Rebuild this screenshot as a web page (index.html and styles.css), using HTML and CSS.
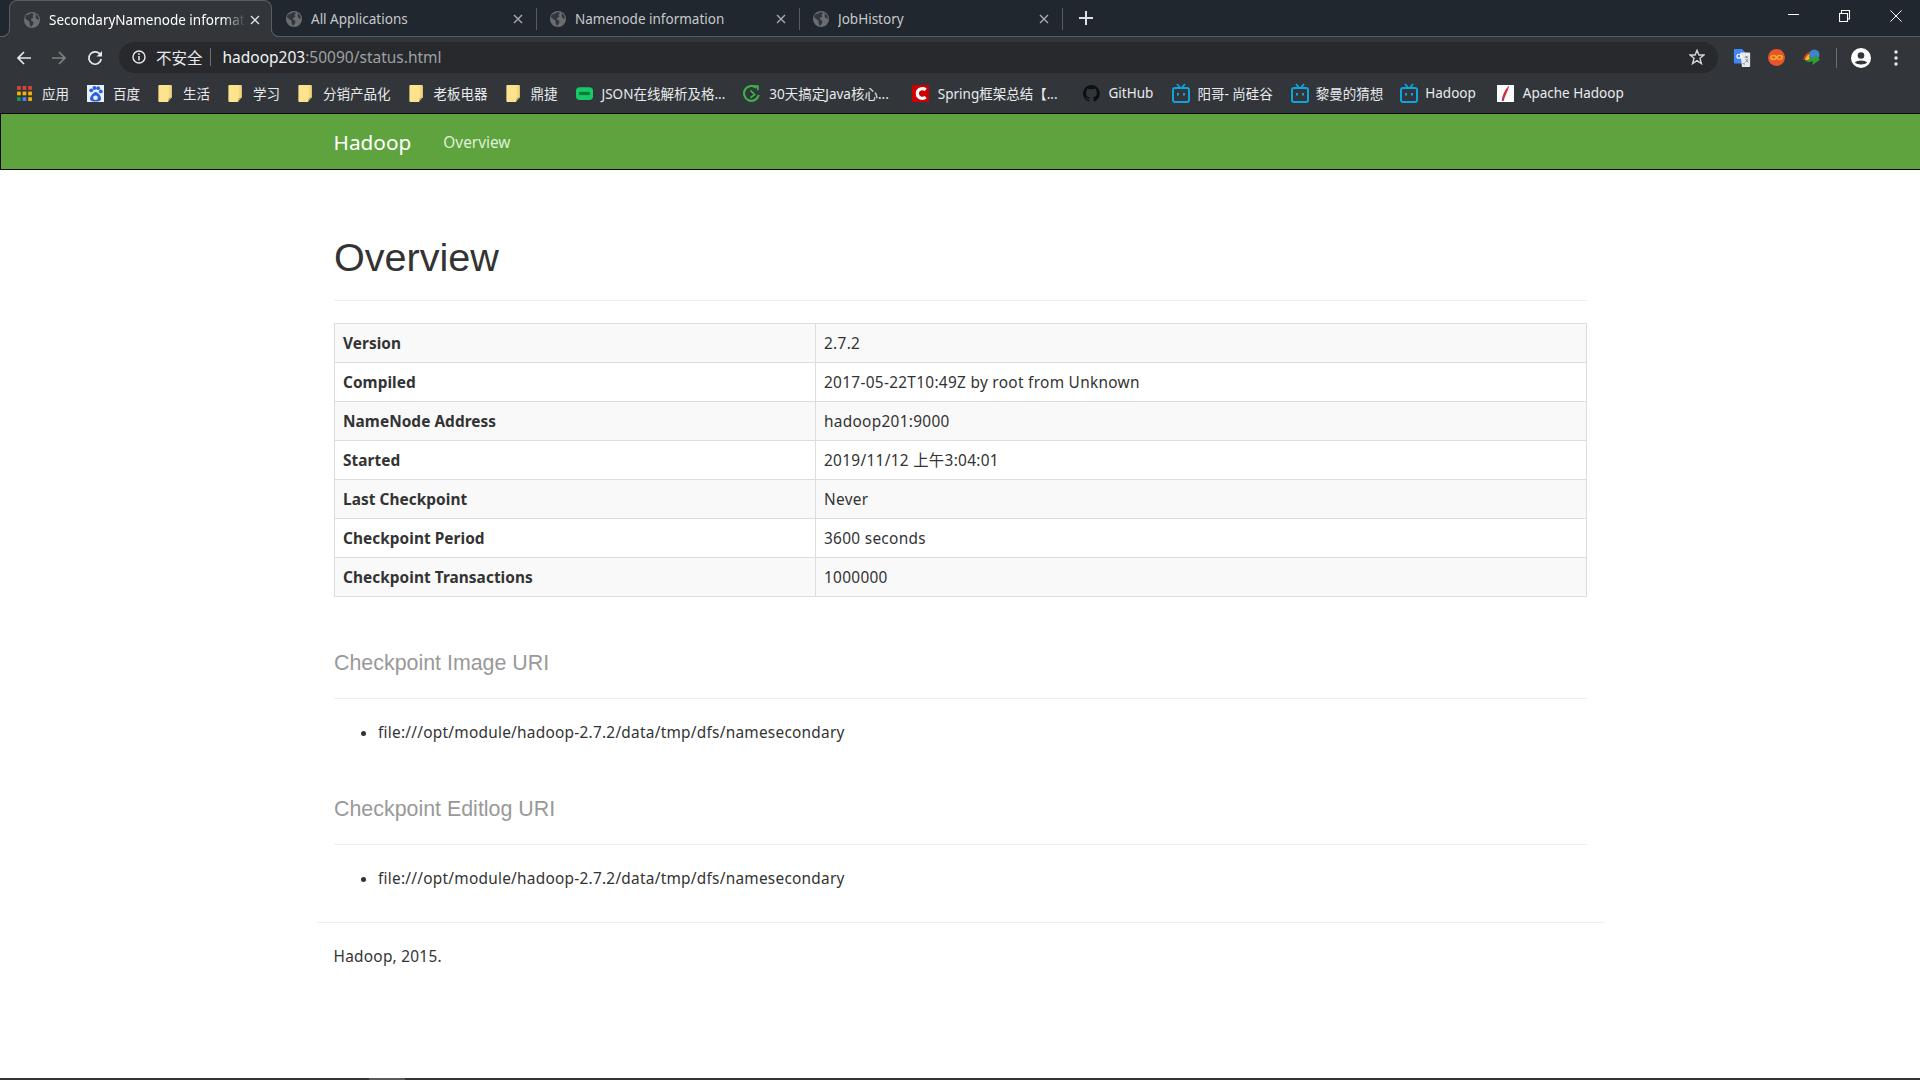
FILE: index.html
```html
<!DOCTYPE html>
<html lang="zh">
<head>
<meta charset="utf-8">
<title>SecondaryNamenode information</title>
<link rel="stylesheet" href="styles.css">
</head>
<body>
<svg class="defs" width="0" height="0" aria-hidden="true">
  <symbol id="globe" viewBox="0 0 16 16">
    <circle cx="8" cy="8" r="8" fill="#6a6e72"/>
    <path d="M2 3.5 5 2.5 7.5 1 10 2 8.5 4 9.5 5.5 7 7 7.5 9 9.5 9.8 9 12.5 7 15 5.5 12 5.5 9.5 3 8 1 6Z" fill="#33373b"/>
    <path d="M11 1.5 14 4 15 8 12.5 7 11.5 5 12 3.5Z" fill="#33373b"/>
  </symbol>
  <symbol id="folder" viewBox="0 0 14 18">
    <path d="M0 1Q0 0 1 0H13Q14 0 14 1V13L10 18H1Q0 18 0 17Z" fill="#fee38f"/>
    <path d="M11 0H13Q14 0 14 1V13L11 16Z" fill="#f4d67e"/>
    <path d="M14 13 10 18 11 14Z" fill="#b39a52"/>
  </symbol>
  <symbol id="bili" viewBox="0 0 18 20">
    <path d="M5 1 8 4.5M13 1 10 4.5" stroke="#10a3dc" stroke-width="1.8" fill="none"/>
    <rect x="1" y="5" width="16" height="14" rx="2" fill="none" stroke="#10a3dc" stroke-width="2"/>
    <rect x="5" y="10" width="2" height="2.5" fill="#10a3dc"/>
    <rect x="11" y="10" width="2" height="2.5" fill="#10a3dc"/>
  </symbol>
  <symbol id="tabx" viewBox="0 0 10 10">
    <path d="M1 1 9 9M9 1 1 9" stroke="currentColor" stroke-width="1.4" fill="none"/>
  </symbol>
</svg>

<div class="app">
  <header class="chrome">
    <div class="tabstrip">
      <div class="tab tab-active">
        <svg class="tab-icon"><use href="#globe"/></svg>
        <span class="tab-title">SecondaryNamenode informat</span>
        <svg class="tab-close"><use href="#tabx"/></svg>
      </div>
      <div class="tab">
        <svg class="tab-icon"><use href="#globe"/></svg>
        <span class="tab-title">All Applications</span>
        <svg class="tab-close"><use href="#tabx"/></svg>
        <span class="tab-sep"></span>
      </div>
      <div class="tab">
        <svg class="tab-icon"><use href="#globe"/></svg>
        <span class="tab-title">Namenode information</span>
        <svg class="tab-close"><use href="#tabx"/></svg>
        <span class="tab-sep"></span>
      </div>
      <div class="tab">
        <svg class="tab-icon"><use href="#globe"/></svg>
        <span class="tab-title">JobHistory</span>
        <svg class="tab-close"><use href="#tabx"/></svg>
        <span class="tab-sep"></span>
      </div>
      <svg class="newtab" viewBox="0 0 14 14"><path d="M7 0V14M0 7H14" stroke="#dfe1e3" stroke-width="2"/></svg>
      <div class="win-controls">
        <svg class="win-btn" viewBox="0 0 12 12"><path d="M0 4.500H11" stroke="#fff" stroke-width="1"/></svg>
        <svg class="win-btn" viewBox="0 0 12 12"><path d="M2.500 3V0.500H10.500V9H8.500M0.500 3.500H8.500V11.500H0.500Z" stroke="#fff" stroke-width="1.100" fill="none"/></svg>
        <svg class="win-btn" viewBox="0 0 12 12"><path d="M0.500 0.500 11.500 11.500M11.500 0.500 0.500 11.500" stroke="#fff" stroke-width="1"/></svg>
      </div>
    </div>

    <div class="toolbar">
      <svg class="nav-icon" viewBox="0 0 16 16"><path d="M15 8H2M8 2 2 8 8 14" stroke="#e8eaed" stroke-width="1.700" fill="none"/></svg>
      <svg class="nav-icon" viewBox="0 0 16 16"><path d="M1 8H14M8 2 14 8 8 14" stroke="#7d8184" stroke-width="1.700" fill="none"/></svg>
      <svg class="nav-icon nav-reload" viewBox="0 0 16 16"><path d="M13.500 5A6.200 6.200 0 1 0 14.200 9" stroke="#e8eaed" stroke-width="1.700" fill="none"/><path d="M15 1V6.500H9.500Z" fill="#e8eaed"/></svg>
      <div class="omnibox">
        <svg class="info" viewBox="0 0 14 14"><circle cx="7" cy="7" r="6" fill="none" stroke="#e8eaed" stroke-width="1.400"/><path d="M7 6V10.500M7 3.300V5" stroke="#e8eaed" stroke-width="1.500"/></svg>
        <span class="insecure">不安全</span>
        <span class="omni-sep"></span>
        <span class="url"><b class="host">hadoop203</b>:50090/status.html</span>
        <svg class="star" viewBox="0 0 16 16"><path d="M8 1.300 9.900 6H15L11 9.300 12.400 14.600 8 11.700 3.600 14.600 5 9.300 1 6H6.100Z" fill="none" stroke="#d4d6d8" stroke-width="1.400"/></svg>
      </div>
      <div class="extensions">
        <svg class="ext ext-translate" viewBox="0 0 18 20">
          <path d="M0 1Q0 0 1 0H9L12 3V16H1Q0 16 0 15Z" fill="#4285f4"/>
          <path d="M7 4H17Q18 4 18 5V19Q18 20 17 20H9Z" fill="#e8eaed"/>
          <path d="M9 16H12V17.500Z" fill="#2a56c6"/>
          <circle cx="5.500" cy="8" r="2.200" fill="none" stroke="#fff" stroke-width="1.300"/>
          <path d="M12 9H16M14 8V10M12.500 15 16 11M13 11 16 15" stroke="#7a7d80" stroke-width="1"/>
        </svg>
        <svg class="ext ext-round" viewBox="0 0 20 20">
          <circle cx="10" cy="10" r="10" fill="#ea5330"/>
          <path d="M10 10C8.500 7 3.500 7 3.500 10S8.500 13 10 10C11.500 7 16.500 7 16.500 10S11.500 13 10 10Z" fill="none" stroke="#f3b51f" stroke-width="1.800"/>
        </svg>
        <svg class="ext ext-idm" viewBox="0 0 20 20">
          <circle cx="13" cy="7" r="5.500" fill="#3f83c9"/>
          <path d="M1 12C3 6 7 4 9 4C6 7 6 10 7 12Z" fill="#d83a2c"/>
          <path d="M3 13C4 9 6 7 8 6C7 9 8 11 9 12Z" fill="#f0c020"/>
          <path d="M10 10H14L14 7 19 12 11 18 11.500 14C8 15 5 15 3 13 6 13 8 12 10 10Z" fill="#2f9e2f"/>
        </svg>
        <span class="ext-sep"></span>
        <svg class="ext ext-user" viewBox="0 0 20 20">
          <circle cx="10" cy="10" r="10" fill="#fff"/>
          <circle cx="10" cy="7.500" r="3.300" fill="#32363a"/>
          <path d="M3.800 14.500C6 11.800 14 11.800 16.200 14.500C14 17 6 17 3.800 14.500Z" fill="#32363a"/>
        </svg>
        <svg class="ext ext-menu" viewBox="0 0 4 16"><circle cx="2" cy="2" r="1.700" fill="#e8eaed"/><circle cx="2" cy="8" r="1.700" fill="#e8eaed"/><circle cx="2" cy="14" r="1.700" fill="#e8eaed"/></svg>
      </div>
    </div>

    <nav class="bookmarks">
      <a class="bm">
        <svg class="bm-icon" viewBox="0 0 16 16">
          <g fill="#db4437"><rect x="1" y="1" width="3.500" height="3.500"/><rect x="6.200" y="1" width="3.500" height="3.500"/><rect x="11.500" y="1" width="3.500" height="3.500"/></g>
          <g fill="#f4b400"><rect x="1" y="6.200" width="3.500" height="3.500"/><rect x="6.200" y="6.200" width="3.500" height="3.500"/><rect x="11.500" y="6.200" width="3.500" height="3.500"/></g>
          <g fill="#0f9d58"><rect x="1" y="11.500" width="3.500" height="3.500"/></g>
          <rect x="6.200" y="11.500" width="3.500" height="3.500" fill="#4285f4"/>
          <rect x="11.500" y="11.500" width="3.500" height="3.500" fill="#f4b400"/>
        </svg>应用</a>
      <a class="bm">
        <svg class="bm-icon" viewBox="0 0 16 16">
          <rect width="16" height="16" fill="#e8f0fc"/>
          <g fill="#2f5fd8"><circle cx="4" cy="5" r="1.800"/><circle cx="7" cy="2.800" r="1.800"/><circle cx="10.500" cy="3" r="1.800"/><circle cx="13" cy="6" r="1.800"/><path d="M8 6.500C11 7 14 11 13 14 11 16 5 16 3 14 2 11 6 7 8 6.500Z"/></g>
          <circle cx="8" cy="12" r="2.200" fill="#e8f0fc"/>
        </svg>百度</a>
      <a class="bm"><svg class="bm-folder"><use href="#folder"/></svg>生活</a>
      <a class="bm"><svg class="bm-folder"><use href="#folder"/></svg>学习</a>
      <a class="bm"><svg class="bm-folder"><use href="#folder"/></svg>分销产品化</a>
      <a class="bm"><svg class="bm-folder"><use href="#folder"/></svg>老板电器</a>
      <a class="bm"><svg class="bm-folder"><use href="#folder"/></svg>鼎捷</a>
      <a class="bm">
        <svg class="bm-icon" viewBox="0 0 16 16"><rect y="2" width="16" height="12" rx="3.500" fill="#17c964"/><rect x="3" y="6.500" width="10" height="3" fill="#0b7a3c"/></svg>JSON在线解析及格...</a>
      <a class="bm">
        <svg class="bm-icon" viewBox="0 0 16 16"><path d="M12.800 2.800A7 7 0 1 0 14.800 9.500" stroke="#3cb44a" stroke-width="2" fill="none"/><path d="M7 5 11 9 7 12M10 1 14 1 14 5" stroke="#3cb44a" stroke-width="1.500" fill="none"/></svg>30天搞定Java核心...</a>
      <a class="bm bm-after-long">
        <svg class="bm-icon" viewBox="0 0 16 16"><rect width="16" height="16" fill="#c00"/><path d="M13 4.500C10 2.500 5 3.500 5 8S10 13.500 13 11.500" stroke="#fff" stroke-width="3" fill="none"/></svg>Spring框架总结【...</a>
      <a class="bm bm-github">
        <svg class="bm-icon" viewBox="0 0 16 16"><path d="M8 0a8 8 0 0 0-2.500 15.600c.4.100.5-.2.500-.4v-1.400c-2.200.5-2.700-1-2.700-1-.4-.9-.9-1.200-.9-1.200-.7-.5.100-.5.100-.5.800.100 1.200.8 1.200.8.700 1.200 1.900.9 2.300.7.100-.5.300-.9.500-1.100-1.800-.2-3.600-.9-3.600-4 0-.9.300-1.600.8-2.100-.1-.2-.4-1 .1-2.100 0 0 .7-.2 2.200.8a7.600 7.600 0 0 1 4 0c1.500-1 2.200-.8 2.200-.8.400 1.100.2 1.900.1 2.100.5.600.8 1.300.8 2.100 0 3.100-1.900 3.700-3.700 3.900.3.300.6.800.6 1.500v2.200c0 .2.100.5.600.4A8 8 0 0 0 8 0Z" fill="#0d0f11"/></svg>GitHub</a>
      <a class="bm bm-wide"><svg class="bm-bili"><use href="#bili"/></svg>阳哥- 尚硅谷</a>
      <a class="bm"><svg class="bm-bili"><use href="#bili"/></svg>黎曼的猜想</a>
      <a class="bm bm-tight"><svg class="bm-bili"><use href="#bili"/></svg>Hadoop</a>
      <a class="bm bm-apache">
        <svg class="bm-icon" viewBox="0 0 16 16"><rect width="16" height="16" fill="#fbfbfb"/><path d="M11 1C7 5 5 10 4.500 14.500L6 15C7.500 11 10 6 11.500 1Z" fill="#c9303e"/><path d="M5 12 4.500 15 7 14Z" fill="#7a3a8a"/></svg>Apache Hadoop</a>
    </nav>
  </header>

  <div class="navbar">
    <div class="nav-inner">
      <a class="brand">Hadoop</a>
      <a class="nav-link">Overview</a>
    </div>
  </div>

  <main class="page">
    <div class="page-header"><h1>Overview</h1></div>
    <table class="info-table">
      <tbody>
        <tr><th>Version</th><td>2.7.2</td></tr>
        <tr><th>Compiled</th><td>2017-05-22T10:49Z by root from Unknown</td></tr>
        <tr><th>NameNode Address</th><td>hadoop201:9000</td></tr>
        <tr><th>Started</th><td>2019/11/12 上午3:04:01</td></tr>
        <tr><th>Last Checkpoint</th><td>Never</td></tr>
        <tr><th>Checkpoint Period</th><td>3600 seconds</td></tr>
        <tr><th>Checkpoint Transactions</th><td>1000000</td></tr>
      </tbody>
    </table>
    <div class="sub-header"><h2>Checkpoint Image URI</h2></div>
    <ul class="uri-list"><li>file:///opt/module/hadoop-2.7.2/data/tmp/dfs/namesecondary</li></ul>
    <div class="sub-header"><h2>Checkpoint Editlog URI</h2></div>
    <ul class="uri-list"><li>file:///opt/module/hadoop-2.7.2/data/tmp/dfs/namesecondary</li></ul>
  </main>
  <footer class="footer">
    <hr class="footer-rule">
    <p class="footer-text">Hadoop, 2015.</p>
  </footer>
  <div class="spacer"></div>
  <div class="bottom-bar"><span class="bottom-thumb"></span></div>
</div>
</body>
</html>
```
FILE: styles.css
```css
* { box-sizing: border-box; }
html, body { margin: 0; padding: 0; height: 100%; overflow: hidden; background: #fff; }
body { font-family: "Noto Sans", "Noto Sans CJK SC", sans-serif; font-size: 15.4px; color: #333; letter-spacing: .25px; }
.defs { position: absolute; }
.app { display: flex; flex-direction: column; height: 1080px; }

/* browser chrome */
.chrome { background: #32363a; color: #e8eaed; flex: none; letter-spacing: 0; }
.tabstrip { display: flex; align-items: stretch; height: 37px; background: #21272e; border-bottom: 1px solid #5a5e61; padding-left: 9px; position: relative; }
.tab { width: 263px; height: 36px; display: flex; align-items: center; padding-left: 14px; color: #c6c9cc; font-size: 13.5px; }
.tab + .tab + .tab { padding-left: 13px; }
.tab-title { flex: 1; margin-left: 9px; white-space: nowrap; overflow: hidden; position: relative; top: 1px; }
.tab-icon { width: 16px; height: 16px; flex: none; position: relative; top: 1px; }
.tab-close { width: 10px; height: 10px; flex: none; color: #a9acaf; margin-right: 13px; position: relative; top: 1px; }
.tab-sep { width: 1px; height: 22px; background: #585c60; flex: none; margin-top: 1px; }
.tab-active { background: #32363a; height: 37px; color: #fff; border: 1px solid #5a5e61; border-bottom: 0; border-radius: 8px 8px 0 0; position: relative; }
.tab-active .tab-close { color: #dfe1e3; margin-right: 11px; }
.tab-active .tab-title { margin-right: 4px; -webkit-mask-image: linear-gradient(90deg, #000 88%, transparent); mask-image: linear-gradient(90deg, #000 88%, transparent); }
.tab-active::before, .tab-active::after { content: ""; position: absolute; bottom: 0; width: 8px; height: 8px; background: #21272e; border: 0 solid #5a5e61; }
.tab-active::before { left: -9px; border-width: 0 1px 1px 0; border-bottom-right-radius: 8px; box-shadow: 4px 4px 0 #32363a; }
.tab-active::after { right: -9px; border-width: 0 0 1px 1px; border-bottom-left-radius: 8px; box-shadow: -4px 4px 0 #32363a; }
.tab-active + .tab { width: 265px; }
.newtab { width: 14px; height: 14px; align-self: center; margin-left: 16px; flex: none; }
.win-controls { margin-left: auto; display: flex; gap: 39px; padding: 10px 18px 0 0; align-items: flex-start; }
.win-btn { width: 12px; height: 12px; flex: none; }

.toolbar { height: 36px; display: flex; align-items: center; padding: 5px 0 0 16px; }
.nav-icon { width: 16px; height: 16px; margin-right: 19px; flex: none; }
.nav-reload { margin-left: 1px; margin-right: 0; }
.omnibox { width: 1599px; height: 31px; margin-left: 16px; background: #27292c; border-radius: 16px; display: flex; align-items: center; padding: 0 13px 1px 13px; font-size: 15.5px; }
.info { width: 14px; height: 14px; flex: none; }
.insecure { margin-left: 10px; color: #e8eaed; }
.omni-sep { width: 1px; height: 18px; background: #6b6f72; margin: 0 12px 0 7px; }
.url { color: #9ea1a4; flex: 1; }
.host { color: #f1f3f4; font-weight: 400; }
.star { width: 16px; height: 16px; flex: none; }
.extensions { display: flex; align-items: center; padding-left: 15px; }
.ext { flex: none; }
.ext-translate { width: 18px; height: 18px; }
.ext-round { width: 17px; height: 17px; margin-left: 17px; }
.ext-idm { width: 19px; height: 19px; margin-left: 17px; }
.ext-sep { width: 1px; height: 20px; background: #6b6f72; margin: 0 14px 0 15px; }
.ext-user { width: 20px; height: 20px; }
.ext-menu { width: 4px; height: 16px; margin-left: 23px; }

.bookmarks { height: 40px; display: flex; align-items: center; padding-left: 16px; gap: 18px; font-size: 13.5px; color: #e8eaed; white-space: nowrap; }
.bm { display: flex; align-items: center; }
.bm-icon { width: 17px; height: 17px; margin-right: 9px; flex: none; }
.bm-folder { width: 14px; height: 17px; margin-right: 11px; flex: none; }
.bm-bili { width: 18px; height: 20px; margin-right: 7px; flex: none; }
.bm-after-long { margin-left: 5px; }
.bm-github { margin-left: 7px; }
.bm-wide { margin-left: 1px; }
.bm-tight { margin-left: -1px; }
.bm-apache { margin-left: 3px; }

/* navbar */
.navbar { height: 57px; flex: none; background: #5fa33e; border: 1px solid #0a0a0a; border-right-width: 0; letter-spacing: 0; }
.nav-inner { width: 1254px; margin: 0 auto; height: 55px; padding-top: 1px; display: flex; align-items: center; }
.brand { color: #fff; font-size: 20.8px; margin-right: 32px; }
.nav-link { color: #dff0d8; font-size: 15.4px; }

/* page */
.page { width: 1254px; margin: 0 auto; flex: none; padding-left: 1px; }
.page-header { padding: 59px 0 14px; border-bottom: 1px solid #eee; margin-bottom: 22px; }
h1 { margin: 0; font-family: "Liberation Sans", Arial, sans-serif; font-weight: 400; font-size: 39.6px; line-height: 1.45; color: #333; height: 57px; letter-spacing: 0; }
.info-table { width: 100%; border-collapse: collapse; table-layout: fixed; margin-bottom: 32px; }
.info-table th, .info-table td { border: 1px solid #ddd; height: 39px; padding: 2px 8px 0; text-align: left; font-size: 15.4px; line-height: 22px; }
.info-table th { width: 481px; font-weight: 700; letter-spacing: .05px; }
.info-table td { font-weight: 400; letter-spacing: .3px; }
.info-table tr:nth-child(odd) th, .info-table tr:nth-child(odd) td { background: #f9f9f9; }
.sub-header { border-bottom: 1px solid #eee; padding: 22px 0 23px; }
h2 { margin: 0; font-family: "Liberation Sans", Arial, sans-serif; font-weight: 400; font-size: 21.4px; line-height: 24px; color: #999; letter-spacing: 0; }
.uri-list { margin: 0; padding: 23px 0 31px 44px; list-style: disc; line-height: 22px; color: #333; }
.uri-list:last-child { padding-bottom: 32px; }

/* footer */
.footer { width: 1287px; margin: 0 auto; flex: none; }
.footer-rule { border: 0; border-top: 1px solid #eee; margin: 0; }
.footer-text { margin: 23px 0 0; padding-left: 17px; line-height: 22px; }
.spacer { flex: 1; }
.bottom-bar { height: 2px; background: #333; flex: none; position: relative; }
.bottom-thumb { position: absolute; left: 369px; width: 36px; top: 0; bottom: 0; background: #5a5a5a; }
```
